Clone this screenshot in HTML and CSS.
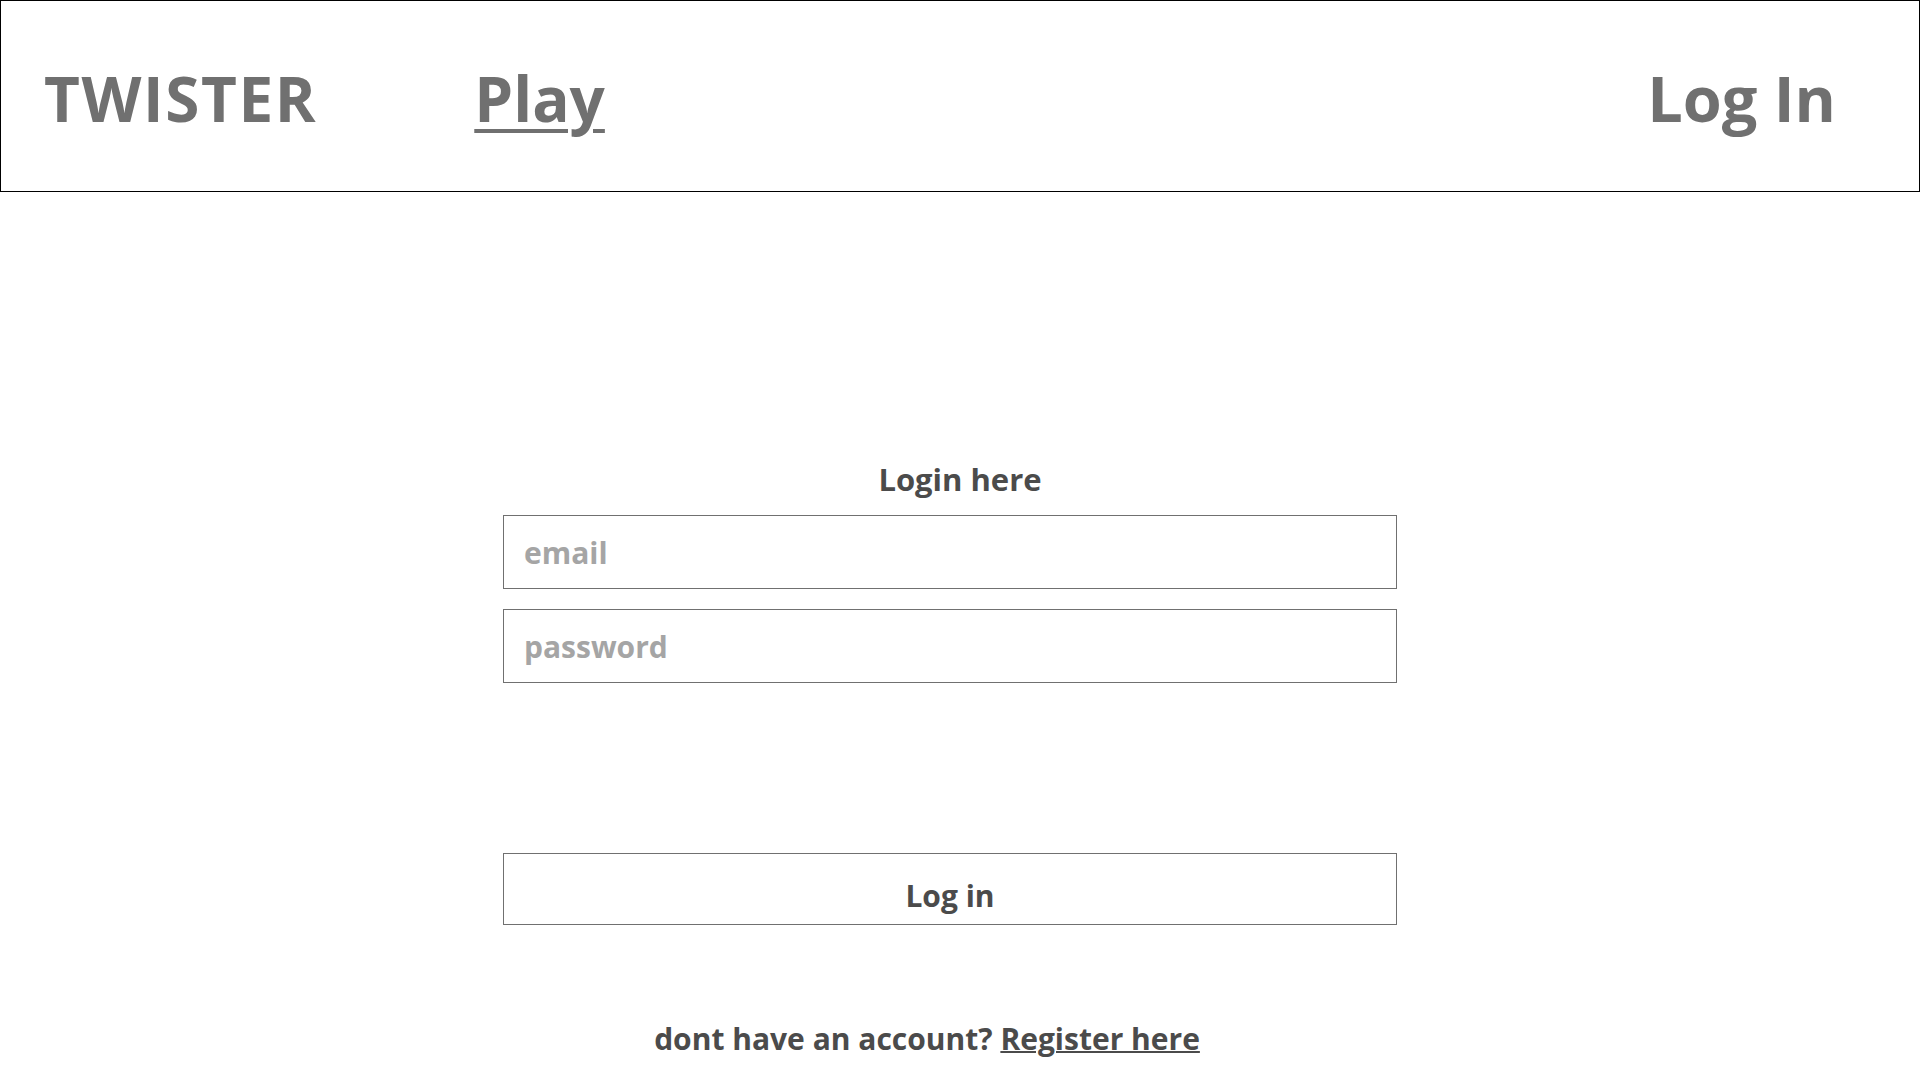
FILE: index.html
```html
<!DOCTYPE html>
<html lang="en">
<head>
<meta charset="utf-8">
<title>Twister - Log In</title>
<link rel="stylesheet" href="styles.css">
</head>
<body>
<header class="topbar">
  <div class="brand">TWISTER</div>
  <a class="nav-play" href="#">Play</a>
  <a class="nav-login" href="#">Log In</a>
</header>
<main class="login">
  <h2 class="login-title">Login here</h2>
  <input class="field" type="email" placeholder="email">
  <input class="field field-pass" type="password" placeholder="password">
  <button class="field submit" type="button">Log in</button>
  <p class="alt">dont have an account? <a class="alt-link" href="#">Register here</a></p>
</main>
</body>
</html>
```
FILE: styles.css
```css
html, body {
  margin: 0;
  padding: 0;
  background: #ffffff;
}

body {
  font-family: "Open Sans", "Noto Sans", sans-serif;
  font-weight: 700;
}

.topbar {
  box-sizing: border-box;
  height: 192px;
  border: 1px solid #000000;
  display: flex;
  align-items: center;
  padding-top: 3px;
  padding-left: 43px;
  padding-right: 83px;
  color: #707070;
  font-size: 62px;
  line-height: 62px;
}

.brand {
  letter-spacing: 1.6px;
}

.nav-play {
  margin-left: 157px;
  color: #707070;
  text-decoration: underline;
  text-decoration-thickness: 4px;
  text-underline-offset: 7px;
}

.nav-login {
  margin-left: auto;
  font-size: 63px;
  color: #707070;
  text-decoration: none;
}

.login {
  display: flex;
  flex-direction: column;
  align-items: center;
  padding-top: 269px;
  color: #4b4b4b;
}

.login-title {
  margin: 0 0 18px 0;
  font-size: 31px;
  line-height: 36px;
  font-weight: 700;
}

.field {
  box-sizing: border-box;
  width: 894px;
  height: 74px;
  margin: 0 20px 0 0;
  border: 1px solid #707070;
  border-radius: 0;
  background: #ffffff;
  padding: 0 0 0 20px;
  font-family: "Open Sans", "Noto Sans", sans-serif;
  font-weight: 700;
  font-size: 30px;
  color: #4b4b4b;
  outline: none;
}

.field::placeholder {
  color: #a5a5a5;
  opacity: 1;
}

.field-pass {
  margin-top: 20px;
}

.submit {
  margin-top: 170px;
  height: 72px;
  padding: 12px 0 0 0;
  display: flex;
  align-items: center;
  justify-content: center;
  cursor: pointer;
}

.alt {
  margin: 93px 66px 0 0;
  font-size: 30px;
  line-height: normal;
}

.alt-link {
  color: #4b4b4b;
  text-decoration: underline;
  text-decoration-thickness: 2px;
}
```
